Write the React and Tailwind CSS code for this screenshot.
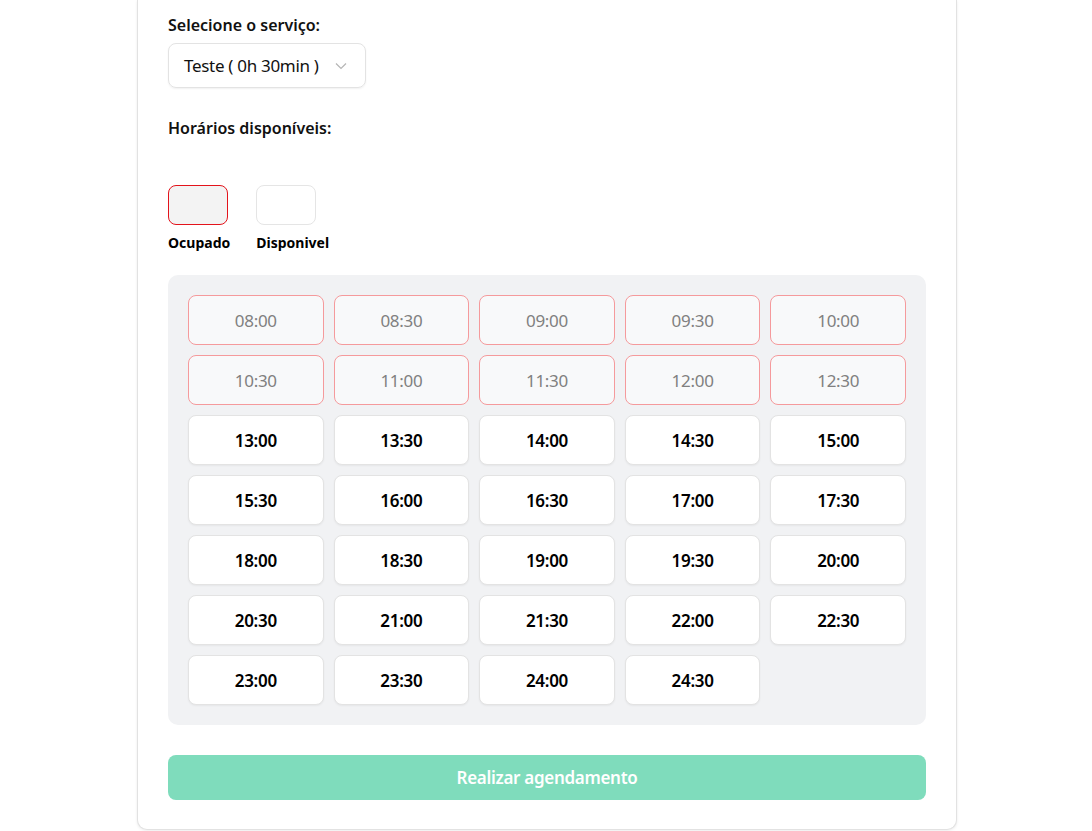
import React from "react";

const occupied = ["08:00","08:30","09:00","09:30","10:00","10:30","11:00","11:30","12:00","12:30"];
const available = ["13:00","13:30","14:00","14:30","15:00","15:30","16:00","16:30","17:00","17:30","18:00","18:30","19:00","19:30","20:00","20:30","21:00","21:30","22:00","22:30","23:00","23:30","24:00","24:30"];

export default function App() {
  return (
    <div className="min-h-screen bg-white" style={{ fontFamily: '"Noto Sans", "Open Sans", sans-serif' }}>
      <div className="ml-[137px] w-[820px] border-x border-b border-[#e2e2e2] rounded-b-[10px] shadow-[0_1px_3px_rgba(0,0,0,0.08)] px-[30px] pt-[13px] pb-[29px] bg-white">
        <div className="text-[16px] leading-[24px] font-semibold text-[#111]">Selecione o serviço:</div>
        <div className="mt-[6px] w-[198px] h-[45px] rounded-[8px] border border-[#e3e3e3] shadow-[0_1px_2px_rgba(0,0,0,0.06)] flex items-center pl-[15px] pr-[18px] justify-between">
          <span className="text-[17px] text-[#111] tracking-[-0.3px]">Teste ( 0h 30min )</span>
          <svg width="12" height="8" viewBox="0 0 12 8" fill="none"><path d="M1 1.5L6 6.5L11 1.5" stroke="#b5b5b5" strokeWidth="1.2" /></svg>
        </div>
        <div className="mt-[28px] text-[16px] leading-[24px] font-semibold text-[#111]">Horários disponíveis:</div>
        <div className="mt-[45px] flex gap-[26px]">
          <div className="flex flex-col">
            <div className="w-[60px] h-[40px] rounded-[8px] border border-[#e3131b] bg-[#f3f3f3]"></div>
            <div className="mt-[9px] text-[14px] leading-[18px] font-bold text-black">Ocupado</div>
          </div>
          <div className="flex flex-col">
            <div className="w-[60px] h-[40px] rounded-[8px] border border-[#e5e5e5] bg-white"></div>
            <div className="mt-[9px] text-[14px] leading-[18px] font-bold text-black">Disponivel</div>
          </div>
        </div>
        <div className="mt-[23px] bg-[#f1f2f4] rounded-[10px] p-5 grid grid-cols-5 gap-[10px]">
          {occupied.map((t) => (
            <div key={t} className="h-[50px] pt-[2px] rounded-[8px] border border-[#f59a9c] bg-[#f8f9fa] flex items-center justify-center text-[17px] text-[#808080] tracking-[-0.3px]">{t}</div>
          ))}
          {available.map((t) => (
            <div key={t} className="h-[50px] pt-[2px] rounded-[8px] border border-[#e3e3e3] bg-white shadow-[0_1px_2px_rgba(0,0,0,0.05)] flex items-center justify-center text-[17px] font-semibold text-black tracking-[-0.3px]">{t}</div>
          ))}
        </div>
        <div className="mt-[30px] h-[45px] rounded-[8px] bg-[#7fdcbc] flex items-center justify-center text-[17px] font-semibold text-white tracking-[-0.3px]">Realizar agendamento</div>
      </div>
    </div>
  );
}
